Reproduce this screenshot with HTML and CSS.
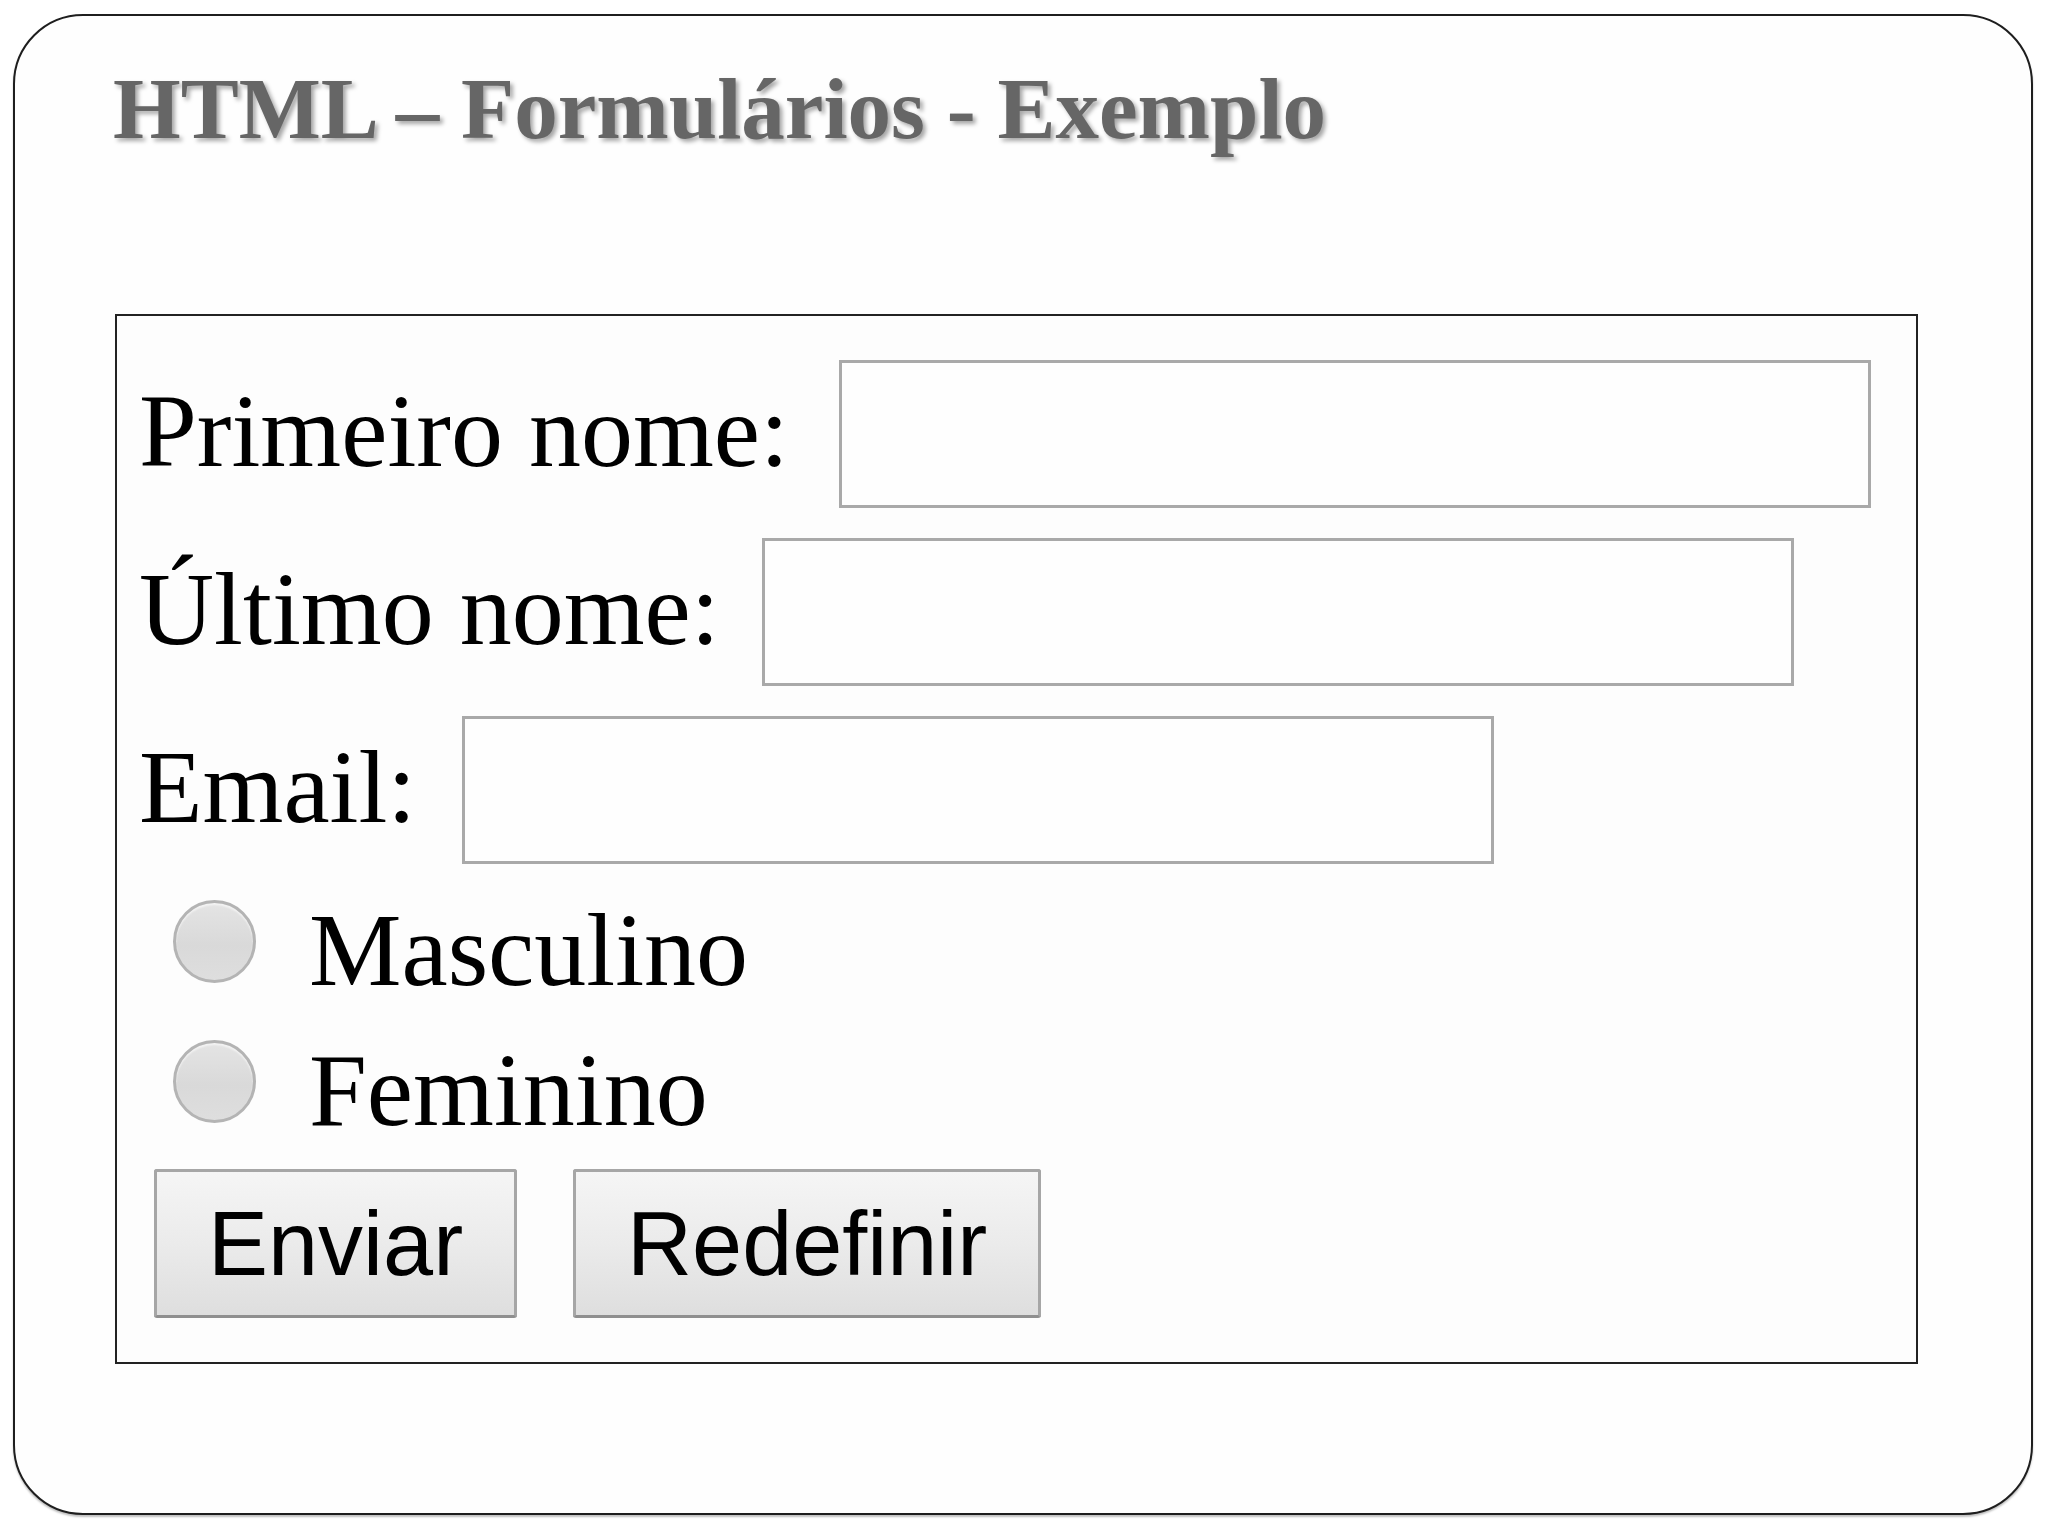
FILE: index.html
```html
<!DOCTYPE html>
<html lang="pt">
<head>
<meta charset="utf-8">
<title>HTML – Formulários - Exemplo</title>
<link rel="stylesheet" href="styles.css">
</head>
<body>
<div class="slide">
  <h1 class="title">HTML – Formulários - Exemplo</h1>
  <form class="form-box">
    <div class="field-row">
      <label class="field-label" for="fn">Primeiro nome:</label>
      <input class="text-input wide-gap" id="fn" type="text">
    </div>
    <div class="field-row">
      <label class="field-label" for="ln">Último nome:</label>
      <input class="text-input narrow-gap" id="ln" type="text">
    </div>
    <div class="field-row">
      <label class="field-label" for="em">Email:</label>
      <input class="text-input" id="em" type="text">
    </div>
    <div class="radio-group">
      <label class="radio-row"><input class="radio" type="radio" name="sexo"><span class="radio-text">Masculino</span></label>
      <label class="radio-row"><input class="radio" type="radio" name="sexo"><span class="radio-text">Feminino</span></label>
    </div>
    <div class="button-row">
      <button class="btn" type="button">Enviar</button>
      <button class="btn" type="button">Redefinir</button>
    </div>
  </form>
</div>
</body>
</html>
```
FILE: styles.css
```css
html, body {
  margin: 0;
  padding: 0;
  background: #ffffff;
}

body {
  padding: 14px 13px;
  font-family: "Liberation Serif", "Times New Roman", serif;
}

.slide {
  box-sizing: border-box;
  width: 2020px;
  height: 1501px;
  border: 2px solid #1e1e1e;
  border-radius: 70px;
  background: #fefefe;
  box-shadow: 0 2px 2px rgba(0, 0, 0, 0.25);
  padding: 50px 0 0 98px;
}

.title {
  margin: 0;
  font-family: "Liberation Serif", "Times New Roman", serif;
  font-weight: bold;
  font-size: 87px;
  line-height: 86px;
  color: #666666;
  text-shadow: 3px 3px 4px rgba(0, 0, 0, 0.35);
  white-space: nowrap;
}

.form-box {
  box-sizing: border-box;
  width: 1803px;
  margin: 162px 0 0 2px;
  border: 2px solid #222222;
  background: #fdfdfd;
  padding: 44px 0 44px 22px;
  display: flex;
  flex-direction: column;
}

.field-row {
  display: flex;
  align-items: center;
  height: 148px;
}

.field-row + .field-row {
  margin-top: 30px;
}

.field-label {
  font-size: 104px;
  line-height: 1.1;
  color: #000;
  padding-bottom: 6px;
  white-space: nowrap;
}

.text-input {
  box-sizing: border-box;
  width: 1032px;
  height: 148px;
  margin: 0 0 0 46px;
  border: 3px solid #a9a9a9;
  background: #fefefe;
  padding: 0;
  outline: none;
}

.text-input.wide-gap {
  margin-left: 50px;
}

.text-input.narrow-gap {
  margin-left: 42px;
}

.radio-group {
  display: flex;
  flex-direction: column;
  margin-top: 7px;
}

.radio-row {
  display: flex;
  align-items: center;
  height: 140px;
}

.radio {
  -webkit-appearance: none;
  appearance: none;
  box-sizing: border-box;
  width: 83px;
  height: 83px;
  margin: 0 0 0 34px;
  border-radius: 50%;
  border: 3px solid #b4b4b4;
  background: linear-gradient(#e4e4e4, #d9d9d9 55%, #dedede);
  box-shadow: inset 0 2px 2px rgba(255, 255, 255, 0.6);
}

.radio-text {
  margin-left: 53px;
  font-size: 104px;
  line-height: 1.1;
  color: #000;
  padding-top: 18px;
  white-space: nowrap;
}

.button-row {
  display: flex;
  gap: 56px;
  margin: 18px 0 0 15px;
}

.btn {
  box-sizing: border-box;
  height: 149px;
  padding: 0 51px;
  border: 3px solid #a6a6a6;
  border-bottom-color: #8f8f8f;
  border-radius: 3px;
  background: linear-gradient(#f5f5f5, #ebebeb 50%, #dedede);
  font-family: "Liberation Sans", Arial, sans-serif;
  font-size: 90px;
  line-height: 1;
  color: #000;
}
```
